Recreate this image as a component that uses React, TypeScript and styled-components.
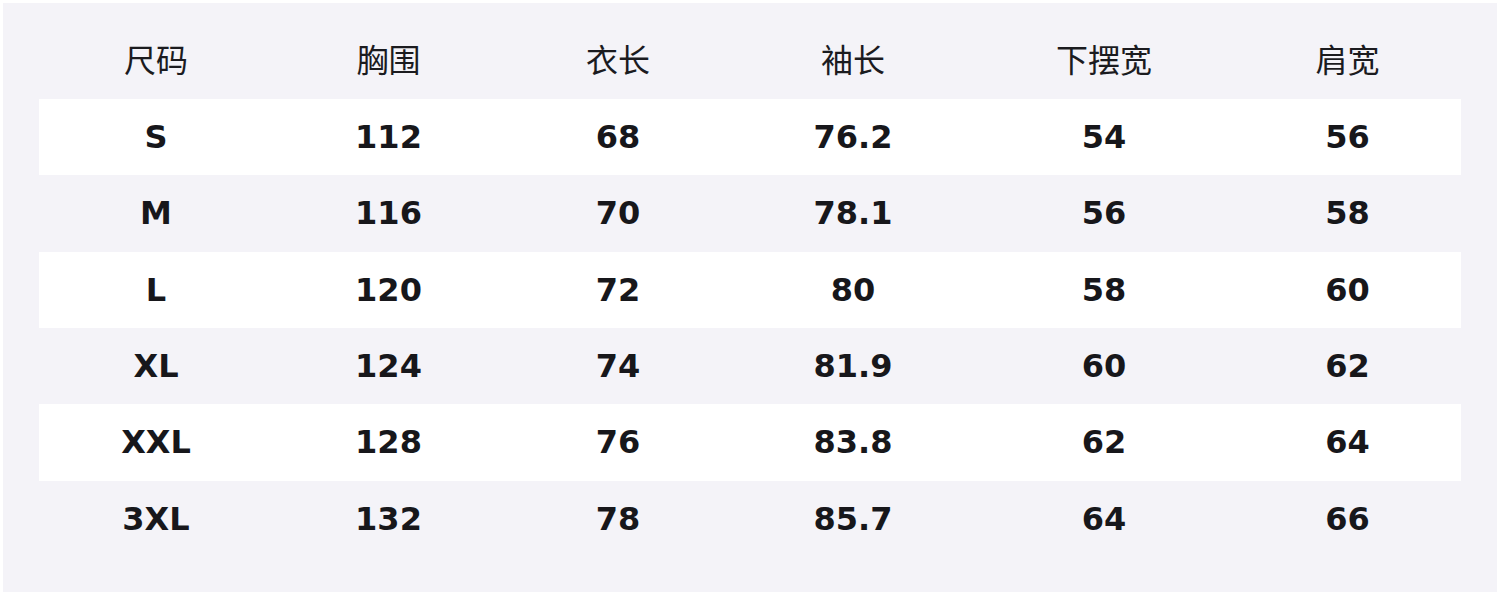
import React from 'react';
import styled, { createGlobalStyle } from 'styled-components';

const GlobalStyle = createGlobalStyle`
  html, body {
    margin: 0;
    padding: 0;
    background: #ffffff;
  }
  body {
    font-family: "DejaVu Sans", "Noto Sans CJK SC", sans-serif;
  }
`;

const Page = styled.div`
  width: 1500px;
  height: 596px;
  box-sizing: border-box;
  padding: 3px 3px 4px 3px;
  background: #ffffff;
`;

const Panel = styled.div`
  height: 100%;
  box-sizing: border-box;
  background: #f4f3f8;
  padding: 13px 36px 0 36px;
`;

const COLUMNS = '234px 231px 228px 242px 260px 227px';

const HeaderRow = styled.div`
  display: grid;
  grid-template-columns: ${COLUMNS};
  height: 83px;
  align-items: center;
`;

const HeaderCell = styled.div`
  text-align: center;
  font-family: "Noto Sans CJK SC", "DejaVu Sans", sans-serif;
  font-size: 32px;
  font-weight: 400;
  color: #1b1b1f;
`;

const Row = styled.div<{ $striped: boolean }>`
  display: grid;
  grid-template-columns: ${COLUMNS};
  height: 76.33px;
  align-items: center;
  background: ${(p) => (p.$striped ? '#ffffff' : 'transparent')};
`;

const Cell = styled.div`
  text-align: center;
  font-family: "DejaVu Sans", sans-serif;
  font-size: 32px;
  font-weight: 700;
  color: #17171b;
`;

const headers = ['尺码', '胸围', '衣长', '袖长', '下摆宽', '肩宽'];

const rows = [
  ['S', '112', '68', '76.2', '54', '56'],
  ['M', '116', '70', '78.1', '56', '58'],
  ['L', '120', '72', '80', '58', '60'],
  ['XL', '124', '74', '81.9', '60', '62'],
  ['XXL', '128', '76', '83.8', '62', '64'],
  ['3XL', '132', '78', '85.7', '64', '66'],
];

export default function App() {
  return (
    <>
      <GlobalStyle />
      <Page>
        <Panel>
          <HeaderRow>
            {headers.map((h) => (
              <HeaderCell key={h}>{h}</HeaderCell>
            ))}
          </HeaderRow>
          {rows.map((r, i) => (
            <Row key={r[0]} $striped={i % 2 === 0}>
              {r.map((v, j) => (
                <Cell key={j}>{v}</Cell>
              ))}
            </Row>
          ))}
        </Panel>
      </Page>
    </>
  );
}
